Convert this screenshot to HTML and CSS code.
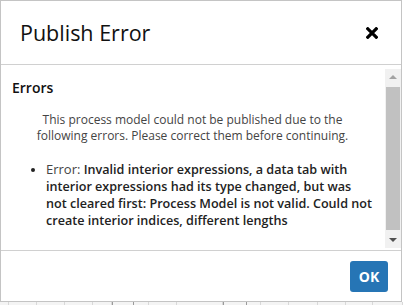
FILE: index.html
```html
<!DOCTYPE html>
<html lang="en">
<head>
<meta charset="UTF-8">
<title>Publish Error</title>
<link rel="stylesheet" href="styles.css">
</head>
<body>

<div class="modal">
    <div class="modalHeader">
        <span class="modalTitle">Publish Error</span>
        <svg class="closeBtn" width="12" height="12" viewBox="0 0 12 12">
            <path d="M1.8 1.8 L10.2 10.2 M10.2 1.8 L1.8 10.2" stroke="#000" stroke-width="3.2" stroke-linecap="square"/>
        </svg>
    </div>

    <div class="modalBody">
        <div class="bodyContent">
            <div class="errHeading">Errors</div>
            <p class="errIntro">This process model could not be published due to the following errors. Please correct them before continuing.</p>
            <ul class="errList">
                <li><span class="errLabel">Error:</span> Invalid interior expressions, a data tab with<br>interior expressions had its type changed, but was<br>not cleared first: Process Model is not valid. Could not<br>create interior indices, different lengths</li>
            </ul>
        </div>
        <div class="scrollBar">
            <div class="arrow up"></div>
            <div class="thumb"></div>
            <div class="arrow down"></div>
        </div>
    </div>

    <div class="modalFooter">
        <button class="okBtn">OK</button>
    </div>
</div>

<div class="gridStrip">
    <span style="width:9px"></span><span style="width:28px"></span><span style="width:28px"></span><span style="width:28px"></span><span style="width:19px"></span><span class="dark" style="width:22px"></span><span style="width:15px"></span><span style="width:28px"></span><span style="width:46px"></span><span class="dark" style="width:24px"></span><span style="width:14px"></span><span style="width:28px"></span><span style="width:29px"></span><span style="width:28px"></span><span style="width:27px"></span><span style="width:30px"></span>
</div>

</body>
</html>
```

FILE: styles.css
```css
body {
    margin: 0;
    width: 403px;
    background: #fff;
    font-family: "Open Sans", "Noto Sans", sans-serif;
    color: #333;
}

.modal {
    width: 402px; height: 302px;
    box-sizing: border-box;
    border: 1px solid #c4c4c4;
    display: flex; flex-direction: column;
    background: #fff;
}

.modalHeader {
    height: 63px;
    border-bottom: 1px solid #d0d0d0;
    display: flex; align-items: center; justify-content: space-between;
    padding: 0 23px 0 19px;
}
.modalTitle {
    font-size: 21.5px; color: #111;
}
.closeBtn {
    display: block;
    margin-top: 1px;
}

.modalBody {
    height: 186px;
    display: flex;
    padding: 4px 0 2px 0;
    box-sizing: border-box;
    border-bottom: 1px solid #d0d0d0;
}
.bodyContent {
    flex: 1;
    padding: 10px 12px 0 11px;
    font-size: 13px;
}
.errHeading {
    font-size: 14px; font-weight: 600; color: #111;
    line-height: 18px;
}
.errIntro {
    text-align: center; color: #444;
    font-size: 12px;
    line-height: 16px;
    margin: 15px 0 0 0;
    padding: 0 22px;
}
.errList {
    margin: 17px -8px 0 0;
    padding-left: 34px;
    font-size: 12.6px;
    line-height: 17px;
    font-weight: 600; color: #222;
    white-space: nowrap;
}
.errLabel {
    font-weight: normal; color: #444;
    font-size: 13px;
}

.scrollBar {
    width: 16px;
    background: #f1f1f1;
    display: flex; flex-direction: column; align-items: center;
}
.arrow {
    height: 16px; width: 16px;
    display: flex; align-items: center; justify-content: center;
}
.arrow::after {
    content: ""; width: 0; height: 0;
    border-left: 4px solid transparent; border-right: 4px solid transparent;
}
.arrow.up::after { border-bottom: 4px solid #a3a3a3; }
.arrow.down::after { border-top: 4px solid #505050; }
.thumb {
    flex: 1; width: 14px;
    background: #c1c1c1;
    margin: 2px 0 2px 0;
}

.modalFooter {
    flex: 1;
    display: flex; align-items: center; justify-content: flex-end;
    padding-right: 13px;
}
.okBtn {
    width: 38px; height: 31px;
    background: #2675b5; color: #fff;
    border: none; border-radius: 3px;
    font-family: "Open Sans", sans-serif;
    font-size: 14px; font-weight: bold;
    padding: 0;
}

.gridStrip {
    display: flex; height: 3px;
    background: #f4f4f4;
}
.gridStrip span {
    border-right: 1px solid #d8d8d8;
    box-sizing: border-box;
}
.gridStrip span.dark {
    border-left: 1px solid #9a9a9a; border-right-color: #9a9a9a;
}
```
